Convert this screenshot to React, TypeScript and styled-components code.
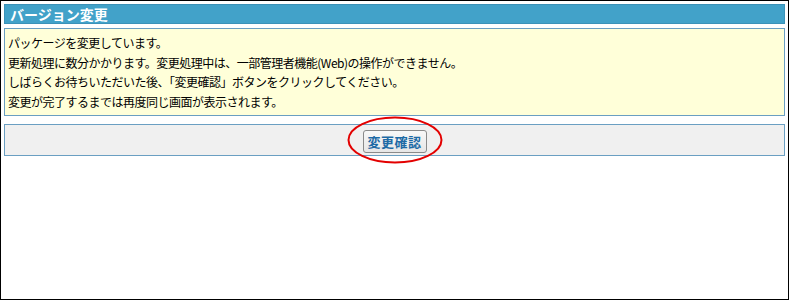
import styled, { createGlobalStyle } from "styled-components";

const GlobalStyle = createGlobalStyle`
	html, body {
		margin: 0;
		padding: 0;
		background: #fff;
	}
	body {
		font-family: "Noto Sans CJK JP", "Liberation Sans", sans-serif;
	}
`;

const Frame = styled.div`
	box-sizing: border-box;
	width: 789px;
	height: 300px;
	border: 1px solid #000;
	padding: 3px;
	display: flex;
	flex-direction: column;
	gap: 4px;
`;

const TitleBar = styled.h1`
	margin: 0;
	height: 20px;
	box-sizing: border-box;
	background: #42a2c9;
	border: 1px solid #3b92b8;
	color: #fff;
	font-size: 14px;
	font-weight: bold;
	line-height: 18px;
	padding-left: 5px;
`;

const Notice = styled.div`
	box-sizing: border-box;
	height: 88px;
	background: #ffffd9;
	border: 1px solid #6a9fc2;
	padding: 4px 3px;
	font-size: 12px;
	line-height: 19.5px;
	letter-spacing: -0.5px;
	color: #000;

	& p {
		margin: 0;
	}
`;

const ActionBar = styled.div`
	box-sizing: border-box;
	height: 32px;
	margin-top: 4px;
	background: #f0f0f0;
	border: 1px solid #6a9fc2;
	display: flex;
	align-items: center;
	justify-content: center;
`;

const ButtonWrap = styled.div`
	position: relative;
`;

const ConfirmButton = styled.button`
	box-sizing: border-box;
	width: 64px;
	height: 23px;
	padding: 0;
	border: 1px solid #8a8a8a;
	border-radius: 3px;
	background: linear-gradient(#f8f8f8, #e6e6e6);
	color: #1d6aa5;
	font-family: "Noto Sans CJK JP", sans-serif;
	font-size: 13px;
	font-weight: bold;
	letter-spacing: 0.5px;
	cursor: pointer;
`;

const Circle = styled.svg`
	position: absolute;
	left: -16px;
	top: -12px;
	pointer-events: none;
`;

const App = () => {
	return (
		<>
			<GlobalStyle />
			<Frame>
				<TitleBar>バージョン変更</TitleBar>
				<Notice>
					<p>パッケージを変更しています。</p>
					<p>更新処理に数分かかります。変更処理中は、一部管理者機能(Web)の操作ができません。</p>
					<p>しばらくお待ちいただいた後、「変更確認」ボタンをクリックしてください。</p>
					<p>変更が完了するまでは再度同じ画面が表示されます。</p>
				</Notice>
				<ActionBar>
					<ButtonWrap>
						<ConfirmButton type="button">変更確認</ConfirmButton>
						<Circle width="98" height="50" viewBox="0 0 98 50">
							<ellipse cx="48" cy="24" rx="46.5" ry="22.5" fill="none" stroke="#e30000" strokeWidth="2" />
						</Circle>
					</ButtonWrap>
				</ActionBar>
			</Frame>
		</>
	);
};

export default App;
